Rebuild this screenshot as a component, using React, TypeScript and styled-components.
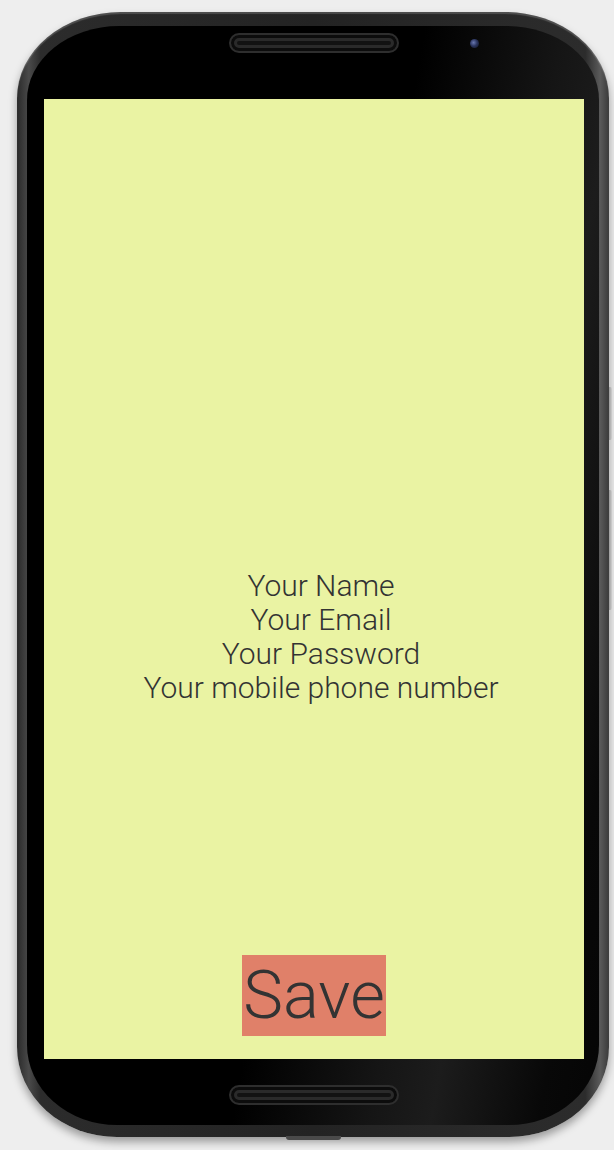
import React from 'react';
import styled, { createGlobalStyle } from 'styled-components';

const GlobalStyle = createGlobalStyle`
  html, body {
    margin: 0;
    padding: 0;
    background: #eeeeee;
  }
  body {
    font-family: Roboto, 'Liberation Sans', sans-serif;
  }
`;

const Page = styled.div`
  width: 614px;
  height: 1150px;
  padding: 12px 0 0 17px;
  box-sizing: border-box;
  background: #eeeeee;
`;

const Body = styled.div`
  position: relative;
  width: 592px;
  height: 1125px;
  box-sizing: border-box;
  padding: 14px 10px 12px 10px;
  border-radius: 104px 104px 100px 100px / 86px 86px 90px 90px;
  background: linear-gradient(90deg, #2a2a2a 0%, #4a4a4a 2%, #2c2c2c 4%, #232323 50%, #2c2c2c 96%, #5a5a5a 98.5%, #3a3a3a 100%);
  box-shadow: 0 5px 8px rgba(0, 0, 0, 0.35), inset 0 2px 1px rgba(255, 255, 255, 0.18);
`;

const SideButton = styled.div<{ $top: number; $height: number }>`
  position: absolute;
  right: -3px;
  top: ${(p) => p.$top}px;
  width: 3px;
  height: ${(p) => p.$height}px;
  border-radius: 0 2px 2px 0;
  background: linear-gradient(90deg, #9a9a9a, #d0d0d0);
`;

const BottomNub = styled.div`
  position: absolute;
  left: 269px;
  bottom: -3px;
  width: 55px;
  height: 4px;
  border-radius: 0 0 3px 3px;
  background: #4a4a4a;
`;

const Bezel = styled.div`
  display: flex;
  flex-direction: column;
  height: 100%;
  box-sizing: border-box;
  padding: 0 15px 0 17px;
  border-radius: 92px 92px 90px 90px / 74px 74px 80px 80px;
  background: linear-gradient(100deg, #000 0%, #000 52%, #151515 70%, #1c1c1c 78%, #080808 92%, #050505 100%);
`;

const EarBar = styled.div<{ $height: number; $pad: number }>`
  display: grid;
  grid-template-columns: 1fr auto 1fr;
  align-items: start;
  height: ${(p) => p.$height}px;
  padding-top: ${(p) => p.$pad}px;
  box-sizing: border-box;
`;

const Speaker = styled.div`
  grid-column: 2;
  width: 170px;
  height: 20px;
  box-sizing: border-box;
  border-radius: 10px;
  background: #121212;
  border: 2px solid #2e2e2e;
  box-shadow: inset 0 0 0 3px #0c0c0c, inset 0 0 0 6px #2a2a2a;
`;

const Camera = styled.div`
  grid-column: 3;
  justify-self: start;
  margin: 6px 0 0 71px;
  width: 9px;
  height: 9px;
  border-radius: 50%;
  background: radial-gradient(circle at 40% 40%, #6a78b0 0%, #2c3660 45%, #0d0f1a 100%);
`;

const Screen = styled.div`
  display: flex;
  flex-direction: column;
  align-items: center;
  flex: 1;
  box-sizing: border-box;
  padding: 470px 0 23px 0;
  background: #eaf3a3;
`;

const Fields = styled.div`
  display: flex;
  flex-direction: column;
  align-items: center;
  padding-left: 14px;
`;

const FieldLabel = styled.div`
  font-family: Roboto, 'Liberation Sans', sans-serif;
  font-weight: 300;
  font-size: 30px;
  line-height: 34px;
  color: #333333;
  white-space: nowrap;
`;

const SaveButton = styled.button`
  margin-top: auto;
  height: 81px;
  min-width: 143px;
  padding: 0 1px;
  border: none;
  background: #e08069;
  font-family: Roboto, 'Liberation Sans', sans-serif;
  font-weight: 300;
  font-size: 67px;
  line-height: 81px;
  color: #333333;
  cursor: pointer;
`;

const labels = ['Your Name', 'Your Email', 'Your Password', 'Your mobile phone number'];

export default function App() {
  return (
    <>
      <GlobalStyle />
      <Page>
        <Body>
          <SideButton $top={375} $height={53} />
          <SideButton $top={478} $height={120} />
          <BottomNub />
          <Bezel>
            <EarBar $height={73} $pad={7}>
              <Speaker />
              <Camera />
            </EarBar>
            <Screen>
              <Fields>
                {labels.map((l) => (
                  <FieldLabel key={l}>{l}</FieldLabel>
                ))}
              </Fields>
              <SaveButton type="button">Save</SaveButton>
            </Screen>
            <EarBar $height={66} $pad={26}>
              <Speaker />
            </EarBar>
          </Bezel>
        </Body>
      </Page>
    </>
  );
}
